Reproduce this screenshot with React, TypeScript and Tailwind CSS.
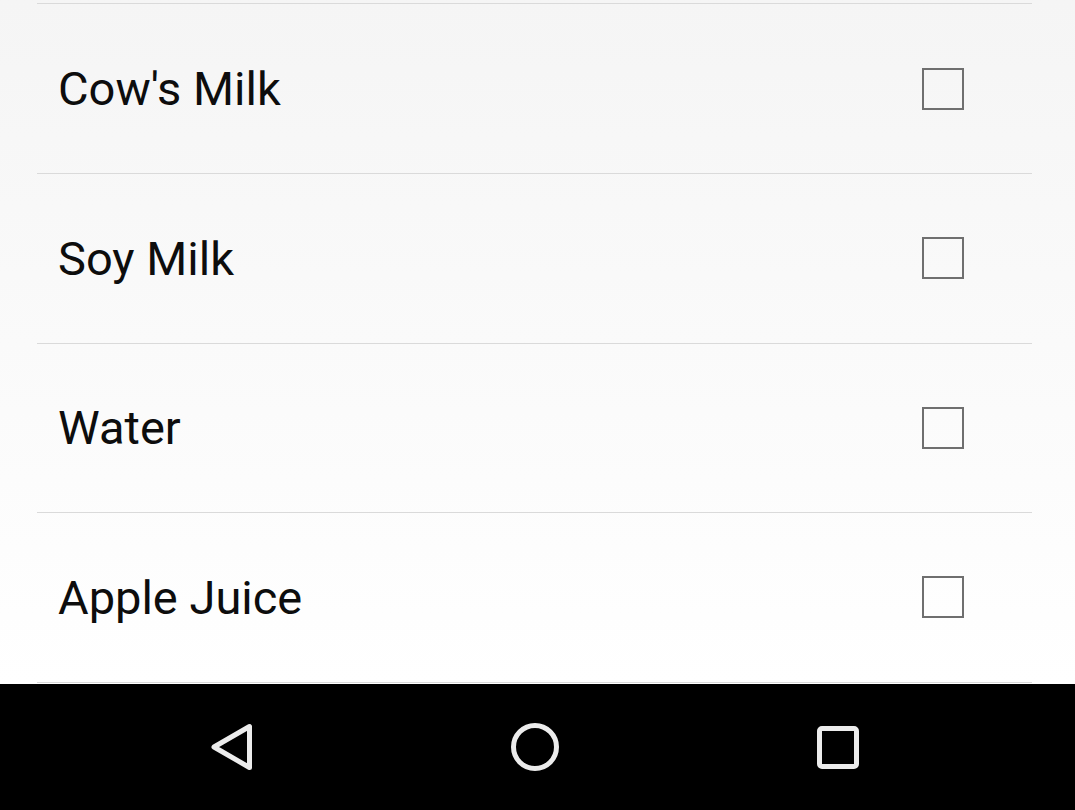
const items = ["Cow's Milk", "Soy Milk", "Water", "Apple Juice"];

function NavBar() {
  return (
    <div className="flex h-[126px] items-center gap-[247px] bg-black pl-[204px]">
      {/* back */}
      <svg width="56" height="56" viewBox="0 0 56 56" fill="none">
        <path
          d="M10 28 L45.5 7.5 L45.5 48.5 Z"
          stroke="#ececec"
          strokeWidth="5"
          strokeLinejoin="round"
        />
      </svg>
      {/* home */}
      <svg width="56" height="56" viewBox="0 0 56 56" fill="none">
        <circle cx="28" cy="28" r="21.5" stroke="#ececec" strokeWidth="5" />
      </svg>
      {/* recents */}
      <svg width="56" height="56" viewBox="0 0 56 56" fill="none">
        <rect x="9.5" y="9.5" width="37" height="38" rx="2.5" stroke="#ececec" strokeWidth="5" />
      </svg>
    </div>
  );
}

export default function App() {
  return (
    <div
      className="flex h-[810px] w-[1075px] flex-col overflow-hidden"
      style={{ fontFamily: "Roboto, 'Noto Sans', sans-serif" }}
    >
      <div className="h-[684px] bg-gradient-to-b from-[#f5f5f5] to-[#ffffff] pt-[3px]">
        <div className="ml-[37px] mr-[43px] border-t border-[#dadada]">
          {items.map((item, i) => (
            <div
              key={item}
              className={
                i === 0
                  ? "flex h-[170px] items-center justify-between border-b border-[#dadada] pl-[21px] pr-[68px]"
                  : "flex h-[169.5px] items-center justify-between border-b border-[#dadada] pl-[21px] pr-[68px]"
              }
            >
              <span className="text-[47px] leading-none text-[#0d0d0d]">{item}</span>
              <div className="h-[42px] w-[42px] border-2 border-[#6f6f6f]" />
            </div>
          ))}
        </div>
      </div>
      <NavBar />
    </div>
  );
}
